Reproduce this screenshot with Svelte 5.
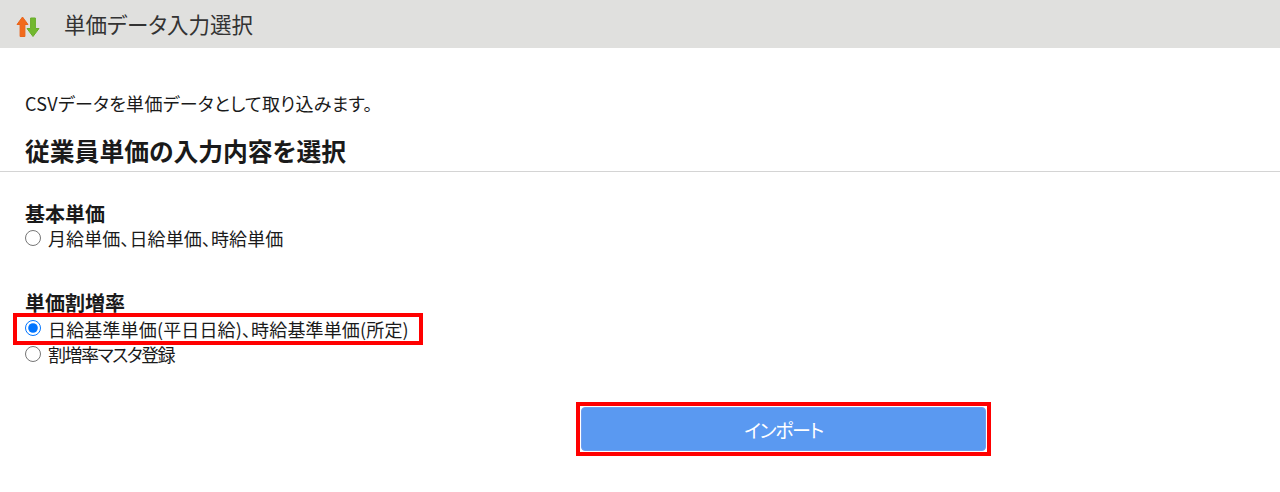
<script>
  let basic = $state('pct');
</script>

<div class="page">
  <header class="bar">
    <svg class="icon" width="24" height="24" viewBox="0 0 24 24" aria-hidden="true">
      <path d="M6.5 4 L12 11.5 H8.9 V23.5 H4.1 V11.5 H1 Z" fill="#f26a1b" stroke="#e8641a" stroke-width="1" stroke-linejoin="round" />
      <path d="M17 23.5 L23 15.5 H19.4 V5 H14.6 V15.5 H11 Z" fill="#72b82f" stroke="#69ad2a" stroke-width="1" stroke-linejoin="round" />
    </svg>
    <h1>単価データ入力選択</h1>
  </header>

  <main class="content">
    <p class="intro">CSVデータを単価データとして取り込みます。</p>
    <h2>従業員単価の入力内容を選択</h2>

    <section class="group first">
      <h3>基本単価</h3>
      <label class="opt"><input type="radio" name="k" value="base" bind:group={basic} />月給単価、日給単価、時給単価</label>
    </section>

    <section class="group second">
      <h3>単価割増率</h3>
      <div class="hl">
        <label class="opt wide"><input type="radio" name="k" value="pct" bind:group={basic} />日給基準単価(平日日給)、時給基準単価(所定)</label>
      </div>
      <label class="opt tight"><input type="radio" name="k" value="mst" bind:group={basic} />割増率マスタ登録</label>
    </section>

    <div class="actions">
      <div class="btn-hl"><button type="button">インポート</button></div>
    </div>
  </main>
</div>

<style>
  :global(body) {
    margin: 0;
    background: #fff;
  }
  .page {
    height: 492px;
    overflow: hidden;
    font-family: "Noto Sans CJK JP", "Liberation Sans", sans-serif;
    font-feature-settings: "palt";
    color: #1a1a1a;
  }
  .bar {
    height: 48px;
    background: #e0e0de;
    display: flex;
    align-items: center;
    padding-left: 16px;
    gap: 24px;
  }
  .icon {
    flex: none;
    margin-top: 2px;
  }
  h1 {
    margin: 0;
    font-size: 21.5px;
    font-weight: 400;
    color: #333;
    line-height: 1;
  }
  .content {
    padding-top: 42px;
  }
  .intro {
    margin: 0 0 0 25px;
    font-size: 18px;
    line-height: 26px;
    letter-spacing: 0.3px;
  }
  h2 {
    margin: 16px 0 0;
    padding: 0 0 3px 25px;
    font-size: 24.8px;
    line-height: 36px;
    font-weight: 700;
    border-bottom: 1px solid #d4d4d4;
  }
  .group {
    margin-left: 25px;
  }
  .first {
    margin-top: 29px;
  }
  .second {
    margin-top: 39px;
  }
  h3 {
    margin: 0;
    font-size: 20px;
    line-height: 26px;
    font-weight: 700;
  }
  .first h3 {
    margin-bottom: -1px;
  }
  .opt {
    display: flex;
    align-items: center;
    font-size: 18px;
    line-height: 25px;
    white-space: nowrap;
    letter-spacing: 0.1px;
  }
  .wide {
    letter-spacing: 0.15px;
  }
  .tight {
    letter-spacing: -1.5px;
  }
  .opt input {
    width: 16px;
    height: 16px;
    margin: 0 7px 0 0;
    accent-color: #0075ff;
    flex: none;
    position: relative;
    top: -1px;
  }
  .hl {
    box-sizing: border-box;
    width: 410px;
    height: 32px;
    margin: -3px 0 -3px -12px;
    padding-left: 8px;
    border: 4px solid #f00;
    display: flex;
    align-items: center;
  }
  .actions {
    margin-top: 35px;
    margin-left: 576px;
  }
  .btn-hl {
    box-sizing: border-box;
    width: 415px;
    height: 54px;
    border: 4px solid #f00;
    padding: 1px;
    display: flex;
  }
  button {
    flex: 1;
    border: 1px solid #6f9fef;
    border-radius: 4px;
    background: #5a99f1;
    color: #fff;
    font: inherit;
    font-size: 19px;
    letter-spacing: -1.3px;
    padding: 0;
  }
</style>
